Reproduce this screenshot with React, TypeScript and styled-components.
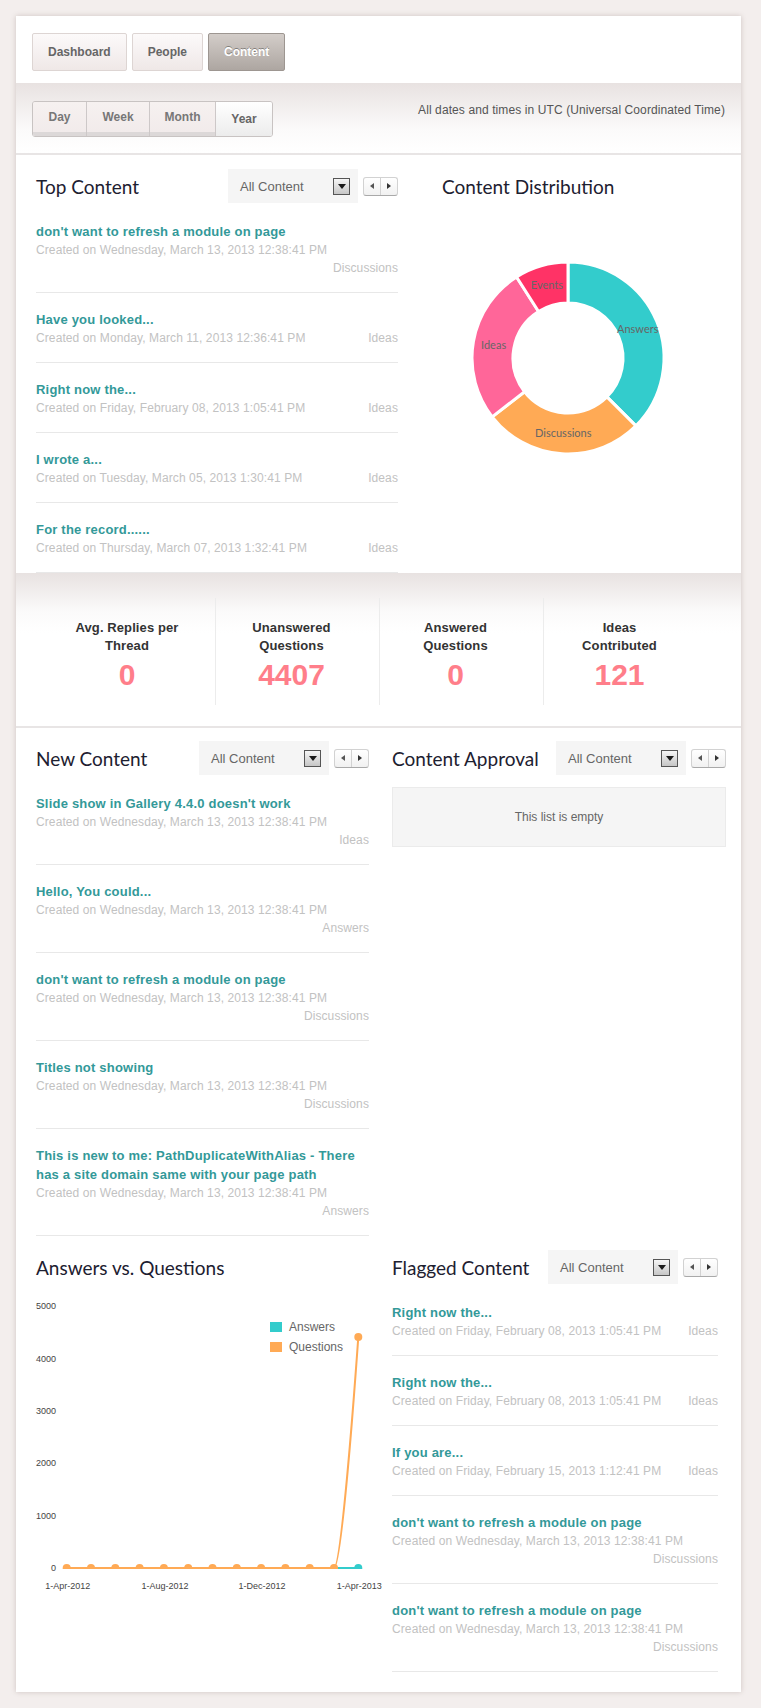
import React from 'react';
import styled, { createGlobalStyle } from 'styled-components';

const GlobalStyle = createGlobalStyle`
  html, body { margin: 0; padding: 0; background: #f3eeed; }
  body { font-family: "Liberation Sans", Arial, sans-serif; }
  * { box-sizing: border-box; }
`;

const Page = styled.div`
  width: 761px;
  padding: 16px 20px 15px 16px;
`;

const Panel = styled.div`
  width: 725px;
  background: #fff;
  box-shadow: 0 0 5px rgba(110, 85, 80, 0.28);
`;

/* ---------- top tabs ---------- */
const TabBar = styled.div`
  display: flex;
  gap: 5px;
  padding: 17px 16px 12px;
`;

const Tab = styled.button<{ $active?: boolean }>`
  height: 38px;
  padding: 0 15px;
  font: bold 12px "Liberation Sans", Arial, sans-serif;
  border-radius: 2px;
  cursor: pointer;
  border: 1px solid ${(p) => (p.$active ? '#9d9691' : '#ddd5d3')};
  background: ${(p) =>
    p.$active ? 'linear-gradient(#d3cdc9, #ada6a1)' : 'linear-gradient(#fcfafa, #efe8e7)'};
  color: ${(p) => (p.$active ? '#fff' : '#666')};
  text-shadow: ${(p) => (p.$active ? '0 -1px 0 rgba(0,0,0,0.35)' : 'none')};
`;

/* ---------- range bar ---------- */
const RangeBar = styled.div`
  display: flex;
  justify-content: space-between;
  align-items: flex-start;
  height: 72px;
  padding: 18px 16px 0;
  background: linear-gradient(#e8e2e1 0px, #fbfafa 46px, #fff 70px);
  border-bottom: 2px solid #e8e5e5;
`;

const Segmented = styled.div`
  display: flex;
  height: 36px;
  border: 1px solid #c8c3c2;
  border-radius: 3px;
  overflow: hidden;
`;

const Seg = styled.button<{ $active?: boolean; $w: number }>`
  width: ${(p) => p.$w}px;
  height: 100%;
  border: none;
  border-left: 1px solid #cdc8c8;
  padding: 0;
  font: bold 12px "Liberation Sans", Arial, sans-serif;
  cursor: pointer;
  &:first-child { border-left: none; }
  color: ${(p) => (p.$active ? '#666' : '#777')};
  background: ${(p) =>
    p.$active ? 'linear-gradient(#ffffff, #ececec)' : 'linear-gradient(#f6f1f0, #f1eaea)'};
  box-shadow: ${(p) => (p.$active ? 'none' : 'inset 0 -4px 0 #dcd8d8')};
  padding-bottom: ${(p) => (p.$active ? '0' : '4px')};
`;

const UtcNote = styled.div`
  font-size: 12px;
  line-height: 18px;
  color: #555;
  letter-spacing: 0.1px;
`;

/* ---------- generic blocks ---------- */
const TwoCol = styled.div<{ $left: number; $right: string; $gap: number; $pt: number }>`
  display: grid;
  grid-template-columns: ${(p) => p.$left}px ${(p) => p.$right};
  column-gap: ${(p) => p.$gap}px;
  align-items: start;
  padding: ${(p) => p.$pt}px 0 0 20px;
`;

const Column = styled.div`
  display: flex;
  flex-direction: column;
`;

const BlockHeader = styled.div`
  display: flex;
  align-items: center;
  height: 34px;
  margin-bottom: 2px;
`;

const Heading = styled.h2`
  flex: 1;
  margin: 0;
  font: 400 19px "Lato", "Open Sans", sans-serif;
  color: #1d2030;
  white-space: nowrap;
`;

const Select = styled.div`
  width: 130px;
  height: 34px;
  display: flex;
  align-items: center;
  justify-content: space-between;
  padding: 0 8px 0 12px;
  background: #f5f5f5;
  font-size: 13px;
  color: #666;
`;

const SelectArrow = styled.span`
  width: 17px;
  height: 17px;
  border: 1px solid #555;
  background: linear-gradient(#f6f6f6, #c6c6c6);
  display: flex;
  align-items: center;
  justify-content: center;
  &::after {
    content: '';
    border-top: 5px solid #1a1a1a;
    border-left: 4px solid transparent;
    border-right: 4px solid transparent;
    margin-top: 1px;
  }
`;

const Pager = styled.div`
  display: flex;
  width: 35px;
  height: 19px;
  margin-left: 5px;
  border: 1px solid #d2d2d2;
  border-bottom-color: #a9a9a9;
  border-radius: 3px;
  background: linear-gradient(#ffffff, #f1f1f1);
`;

const PagerBtn = styled.span<{ $dir: 'left' | 'right' }>`
  flex: 1;
  display: flex;
  align-items: center;
  justify-content: center;
  & + & { border-left: 1px solid #d2d2d2; }
  &::after {
    content: '';
    border-top: 3px solid transparent;
    border-bottom: 3px solid transparent;
    ${(p) => (p.$dir === 'left' ? 'border-right: 4px solid #555;' : 'border-left: 4px solid #333;')}
  }
`;

const Item = styled.div`
  padding: 17px 0 15px;
  border-bottom: 1px solid #e8e8e8;
`;

const ItemTitle = styled.a`
  display: block;
  font: bold 13px/19px "Liberation Sans", Arial, sans-serif;
  letter-spacing: 0.2px;
  color: #339999;
  text-decoration: none;
`;

const Meta = styled.div`
  display: flex;
  flex-wrap: wrap;
  column-gap: 18px;
  font-size: 12px;
  line-height: 18px;
  letter-spacing: 0.1px;
  color: #c2c2c2;
`;

const Category = styled.span`
  margin-left: auto;
`;

/* ---------- stats ---------- */
const StatsBand = styled.div`
  padding: 25px 34px 21px 35px;
  background: linear-gradient(#e8e2e1 0px, #fbfafa 38px, #fff 60px);
  border-bottom: 2px solid #e8e5e5;
`;

const StatsGrid = styled.div`
  display: grid;
  grid-template-columns: repeat(4, 164px);
`;

const Stat = styled.div`
  height: 107px;
  padding: 21px 12px 0 0;
  text-align: center;
  & + & { border-left: 1px solid #ececec; }
`;

const StatLabel = styled.div`
  font: bold 13px/18px "Liberation Sans", Arial, sans-serif;
  letter-spacing: 0.1px;
  color: #333;
`;

const StatValue = styled.div`
  margin-top: 4px;
  font: bold 30px/32px "Liberation Sans", Arial, sans-serif;
  color: #ff7e8a;
`;

const EmptyBox = styled.div`
  margin-top: 10px;
  height: 60px;
  display: flex;
  align-items: center;
  justify-content: center;
  background: #f5f5f5;
  border: 1px solid #ebebeb;
  font-size: 12px;
  color: #666;
`;

const ChartSvg = styled.svg`
  display: block;
  overflow: visible;
`;

const Bottom = styled.div`
  padding-bottom: 20px;
`;

/* ---------- data ---------- */
type Entry = { title: string; date: string; cat: string };

const topContent: Entry[] = [
  { title: "don't want to refresh a module on page", date: 'Created on Wednesday, March 13, 2013 12:38:41 PM', cat: 'Discussions' },
  { title: 'Have you looked...', date: 'Created on Monday, March 11, 2013 12:36:41 PM', cat: 'Ideas' },
  { title: 'Right now the...', date: 'Created on Friday, February 08, 2013 1:05:41 PM', cat: 'Ideas' },
  { title: 'I wrote a...', date: 'Created on Tuesday, March 05, 2013 1:30:41 PM', cat: 'Ideas' },
  { title: 'For the record......', date: 'Created on Thursday, March 07, 2013 1:32:41 PM', cat: 'Ideas' },
];

const wed = 'Created on Wednesday, March 13, 2013 12:38:41 PM';
const newContent: Entry[] = [
  { title: "Slide show in Gallery 4.4.0 doesn't work", date: wed, cat: 'Ideas' },
  { title: 'Hello, You could...', date: wed, cat: 'Answers' },
  { title: "don't want to refresh a module on page", date: wed, cat: 'Discussions' },
  { title: 'Titles not showing', date: wed, cat: 'Discussions' },
  { title: 'This is new to me: PathDuplicateWithAlias - There has a site domain same with your page path', date: wed, cat: 'Answers' },
];

const flagged: Entry[] = [
  { title: 'Right now the...', date: 'Created on Friday, February 08, 2013 1:05:41 PM', cat: 'Ideas' },
  { title: 'Right now the...', date: 'Created on Friday, February 08, 2013 1:05:41 PM', cat: 'Ideas' },
  { title: 'If you are...', date: 'Created on Friday, February 15, 2013 1:12:41 PM', cat: 'Ideas' },
  { title: "don't want to refresh a module on page", date: wed, cat: 'Discussions' },
  { title: "don't want to refresh a module on page", date: wed, cat: 'Discussions' },
];

const stats = [
  { label: ['Avg. Replies per', 'Thread'], value: '0' },
  { label: ['Unanswered', 'Questions'], value: '4407' },
  { label: ['Answered', 'Questions'], value: '0' },
  { label: ['Ideas', 'Contributed'], value: '121' },
];

const slices = [
  { name: 'Answers', value: 375, color: '#33cccc' },
  { name: 'Discussions', value: 270, color: '#ffaa55' },
  { name: 'Ideas', value: 265, color: '#ff6699' },
  { name: 'Events', value: 90, color: '#ff3366' },
];

/* ---------- pieces ---------- */
const Header: React.FC<{ title: string; controls?: boolean }> = ({ title, controls = true }) => (
  <BlockHeader>
    <Heading>{title}</Heading>
    {controls && (
      <>
        <Select>
          <span>All Content</span>
          <SelectArrow />
        </Select>
        <Pager>
          <PagerBtn $dir="left" />
          <PagerBtn $dir="right" />
        </Pager>
      </>
    )}
  </BlockHeader>
);

const List: React.FC<{ items: Entry[] }> = ({ items }) => (
  <div>
    {items.map((it, i) => (
      <Item key={i}>
        <ItemTitle href="#">{it.title}</ItemTitle>
        <Meta>
          <span>{it.date}</span>
          <Category>{it.cat}</Category>
        </Meta>
      </Item>
    ))}
  </div>
);

const Donut: React.FC = () => {
  const cx = 126;
  const cy = 153;
  const r1 = 96;
  const r0 = 55;
  const total = slices.reduce((s, x) => s + x.value, 0);
  const pt = (r: number, a: number) => [cx + r * Math.sin((a * Math.PI) / 180), cy - r * Math.cos((a * Math.PI) / 180)];
  let start = 0;
  return (
    <ChartSvg width={279} height={368}>
      {slices.map((s) => {
        const a0 = start;
        const a1 = start + (s.value / total) * 360;
        start = a1;
        const large = a1 - a0 > 180 ? 1 : 0;
        const [x0, y0] = pt(r1, a0);
        const [x1, y1] = pt(r1, a1);
        const [x2, y2] = pt(r0, a1);
        const [x3, y3] = pt(r0, a0);
        const d = `M${x0} ${y0} A${r1} ${r1} 0 ${large} 1 ${x1} ${y1} L${x2} ${y2} A${r0} ${r0} 0 ${large} 0 ${x3} ${y3}Z`;
        const [lx, ly] = pt((r0 + r1) / 2, (a0 + a1) / 2);
        return (
          <g key={s.name}>
            <path d={d} fill={s.color} stroke="#fff" strokeWidth={3} strokeLinejoin="round" />
            <text x={lx} y={ly} dy="0.35em" textAnchor="middle" fontSize={11} fill="#666" fontFamily="Lato, sans-serif">
              {s.name}
            </text>
          </g>
        );
      })}
    </ChartSvg>
  );
};

const LineChart: React.FC = () => {
  const y0 = 282;
  const yTop = 20;
  const yv = (v: number) => y0 - (v / 5000) * (y0 - yTop);
  const xs = Array.from({ length: 13 }, (_, i) => 30.7 + 24.3 * i);
  const q = xs.map((_, i) => (i === 12 ? 4407 : 0));
  const ticks = [5000, 4000, 3000, 2000, 1000, 0];
  const xl = [
    { i: 0, t: '1-Apr-2012' },
    { i: 4, t: '1-Aug-2012' },
    { i: 8, t: '1-Dec-2012' },
    { i: 12, t: '1-Apr-2013' },
  ];
  const x11 = xs[11];
  const x12 = xs[12];
  const yq = yv(4407);
  const qPath = `M${xs[0]} ${y0} L${x11} ${y0} C${x11 + 7} ${y0} ${x12 - 5} ${yq + 70} ${x12} ${yq}`;
  return (
    <ChartSvg width={333} height={316}>
      <defs>
        <clipPath id="plotClip">
          <rect x={0} y={0} width={340} height={y0 + 1} />
        </clipPath>
      </defs>
      {ticks.map((t) => (
        <text key={t} x={20} y={yv(t)} dy="0.35em" textAnchor="end" fontSize={9} fill="#444" fontFamily="Liberation Sans, Arial, sans-serif">
          {t}
        </text>
      ))}
      {xl.map((l) => (
        <text key={l.t} x={xs[l.i] + 1} y={300} dy="0.35em" textAnchor="middle" fontSize={9} fill="#444" fontFamily="Liberation Sans, Arial, sans-serif">
          {l.t}
        </text>
      ))}
      <g clipPath="url(#plotClip)">
        <line x1={xs[0]} y1={y0} x2={x12} y2={y0} stroke="#33cccc" strokeWidth={2} />
        <circle cx={x12} cy={y0} r={4} fill="#33cccc" />
        <path d={qPath} fill="none" stroke="#ffaa55" strokeWidth={2} />
        {xs.map((x, i) => (
          <circle key={i} cx={x} cy={yv(q[i])} r={4} fill="#ffaa55" />
        ))}
      </g>
      <rect x={234} y={36} width={12} height={10} fill="#33cccc" />
      <text x={253} y={41} dy="0.35em" fontSize={12} fill="#666" fontFamily="Liberation Sans, Arial, sans-serif">
        Answers
      </text>
      <rect x={234} y={56} width={12} height={10} fill="#ffaa55" />
      <text x={253} y={61} dy="0.35em" fontSize={12} fill="#666" fontFamily="Liberation Sans, Arial, sans-serif">
        Questions
      </text>
    </ChartSvg>
  );
};

export default function App() {
  return (
    <>
      <GlobalStyle />
      <Page>
        <Panel>
          <TabBar>
            <Tab>Dashboard</Tab>
            <Tab>People</Tab>
            <Tab $active>Content</Tab>
          </TabBar>

          <RangeBar>
            <Segmented>
              <Seg $w={53}>Day</Seg>
              <Seg $w={63}>Week</Seg>
              <Seg $w={66}>Month</Seg>
              <Seg $w={57} $active>Year</Seg>
            </Segmented>
            <UtcNote>All dates and times in UTC (Universal Coordinated Time)</UtcNote>
          </RangeBar>

          <TwoCol $left={362} $right="279px" $gap={44} $pt={14}>
            <Column>
              <Header title="Top Content" />
              <List items={topContent} />
            </Column>
            <Column>
              <Header title="Content Distribution" controls={false} />
              <Donut />
            </Column>
          </TwoCol>

          <StatsBand>
            <StatsGrid>
              {stats.map((s) => (
                <Stat key={s.value + s.label[0]}>
                  <StatLabel>
                    {s.label[0]}
                    <br />
                    {s.label[1]}
                  </StatLabel>
                  <StatValue>{s.value}</StatValue>
                </Stat>
              ))}
            </StatsGrid>
          </StatsBand>

          <TwoCol $left={333} $right="334px" $gap={23} $pt={13}>
            <Column>
              <Header title="New Content" />
              <List items={newContent} />
            </Column>
            <Column>
              <Header title="Content Approval" />
              <EmptyBox>This list is empty</EmptyBox>
            </Column>
          </TwoCol>

          <Bottom>
            <TwoCol $left={333} $right="326px" $gap={23} $pt={14}>
              <Column>
                <Header title="Answers vs. Questions" controls={false} />
                <LineChart />
              </Column>
              <Column>
                <Header title="Flagged Content" />
                <List items={flagged} />
              </Column>
            </TwoCol>
          </Bottom>
        </Panel>
      </Page>
    </>
  );
}
